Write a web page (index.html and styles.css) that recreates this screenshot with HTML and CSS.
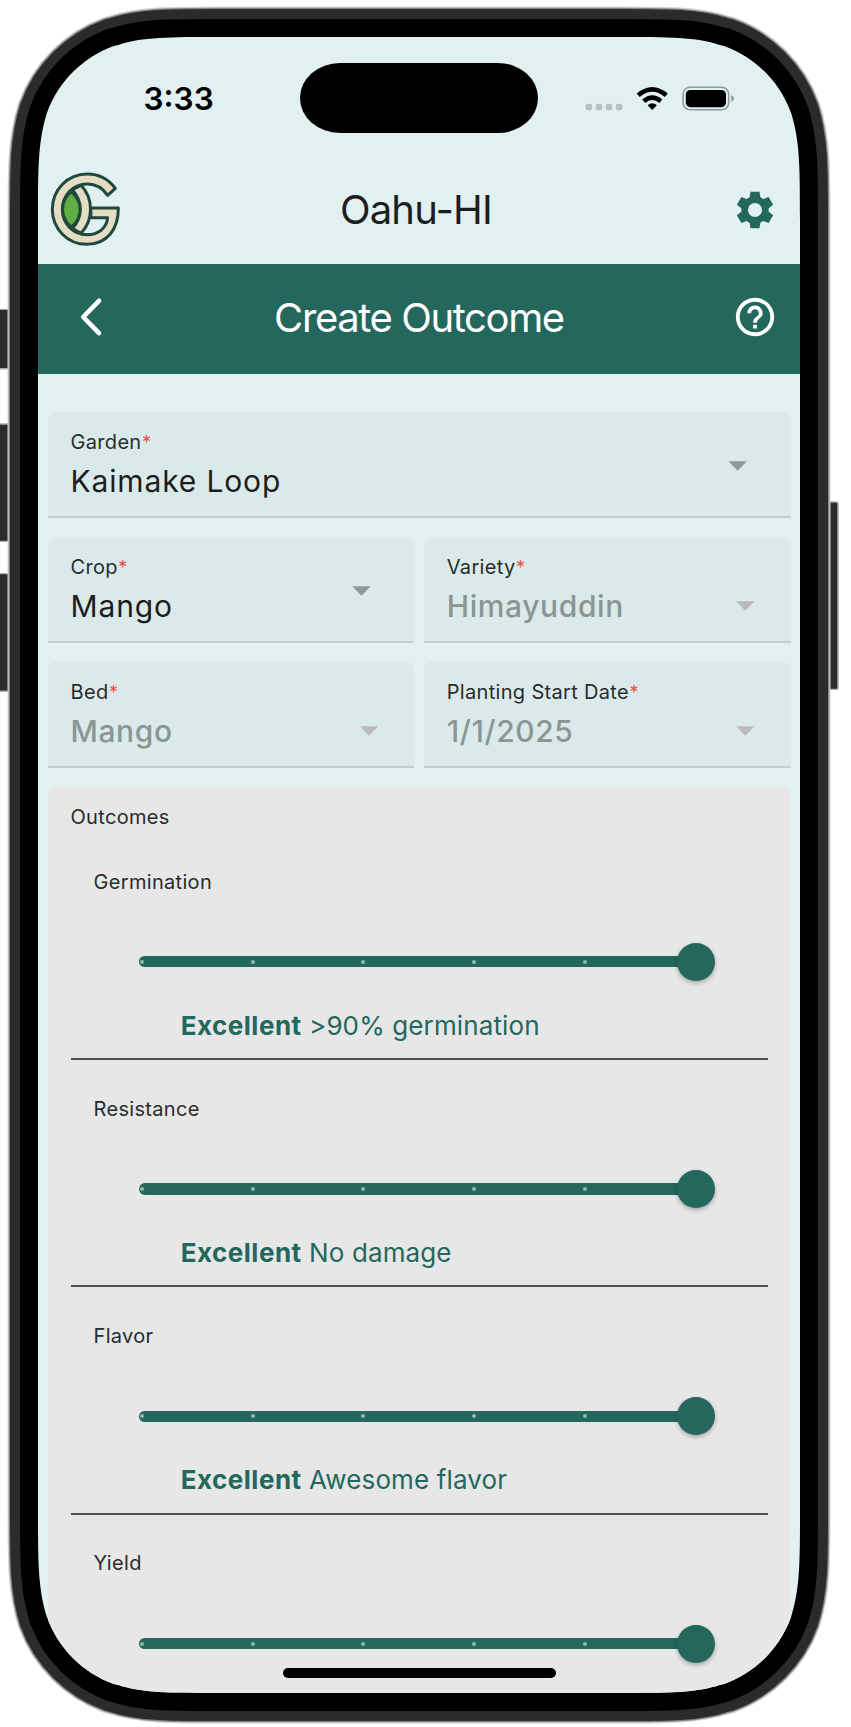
FILE: index.html
```html
<!DOCTYPE html>
<html lang="en">
<head>
<meta charset="utf-8">
<title>Create Outcome</title>
<link rel="stylesheet" href="styles.css">
</head>
<body>
<div class="phone">
  <svg class="bezel" width="851" height="1727" viewBox="0 0 851 1727" aria-hidden="true">
    <defs>
      <path id="outline" d="M183.4,0 H578.6 C631.4,0 657.8,0 681.6,7.9 L686.2,9 C717.3,20.3 741.7,44.7 753,75.8 C762,104.2 762,130.6 762,183.4 V1472.6 C762,1525.4 762,1551.8 753,1580.2 C741.7,1611.3 717.3,1635.7 686.2,1647 L681.6,1648.1 C657.8,1656 631.4,1656 578.6,1656 H183.4 C130.6,1656 104.2,1656 80.4,1648.1 L75.8,1647 C44.7,1635.7 20.3,1611.3 9,1580.2 C0,1551.8 0,1525.4 0,1472.6 V183.4 C0,130.6 0,104.2 9,75.8 C20.3,44.7 44.7,20.3 75.8,9 L80.4,7.9 C104.2,0 130.6,0 183.4,0 Z"/>
    </defs>
    <g fill="#2b2b2b" stroke="#aaa" stroke-width="1.4">
      <rect x="-6" y="309.4" width="20" height="59.4" rx="2"/>
      <rect x="-6" y="424" width="20" height="117.4" rx="2"/>
      <rect x="-6" y="573.6" width="20" height="117.6" rx="2"/>
      <rect x="822" y="502" width="16" height="187.4" rx="2"/>
    </g>
    <g transform="translate(38 37)" fill="#000">
      <use href="#outline" stroke="#d2d2d2" stroke-width="61"/>
      <use href="#outline" stroke="#848484" stroke-width="58.6"/>
      <use href="#outline" stroke="#2b2b2b" stroke-width="56"/>
      <use href="#outline" stroke="#000" stroke-width="36"/>
    </g>
  </svg>

  <main class="screen">
    <div class="status">
      <span class="time">3:33</span>
      <span class="island"></span>
      <svg class="indicators" width="152" height="28" viewBox="582 84 152 28" aria-hidden="true">
        <g fill="#b4c1c0">
          <rect x="584.5" y="103.8" width="6.6" height="6.4" rx="2.2"/>
          <rect x="594.6" y="103.8" width="6.6" height="6.4" rx="2.2"/>
          <rect x="604.7" y="103.8" width="6.6" height="6.4" rx="2.2"/>
          <rect x="614.8" y="103.8" width="6.6" height="6.4" rx="2.2"/>
        </g>
        <g fill="none" stroke="#000" stroke-width="4.6">
          <path d="M637.2 95.2 Q651.2 83.4 665.3 95.2"/>
          <path d="M642.7 101.2 Q651.2 94 659.8 101.2"/>
        </g>
        <path d="M651.2 110 L646.6 105.2 Q651.2 101.4 655.9 105.2 Z" fill="#000"/>
        <rect x="682.1" y="87.2" width="45.6" height="22.6" rx="7" fill="none" stroke="#8f9999" stroke-width="1.6"/>
        <rect x="684.8" y="90" width="40.2" height="17.2" rx="4.6" fill="#000"/>
        <path d="M730.3 95 Q733 96.3 733 98.5 Q733 100.7 730.3 102 Z" fill="#8f9999"/>
      </svg>
    </div>

    <header class="brand">
      <svg class="logo" width="72" height="76" viewBox="150 516 216 228" aria-label="logo">
        <g fill="#e4dcc3" stroke="#21483c" stroke-width="9" stroke-linejoin="round">
          <path d="M217 569 L243 556 C281 596 281 660 243 700 L217 685 C249 652 249 604 217 569 Z"/>
          <path d="M346 565 C325 537 296 522 262 522 C203 522 157 569 157 628 C157 687 203 733 260 733 C320 733 356 688 355 624 L272 624 L273 653 L323 653 C320 684 295 704 262 704 C219 704 187 671 187 628 C187 585 220 552 262 552 C287 552 309 565 323 586 Z"/>
        </g>
        <path d="M213 575 C249 604 249 653 213 681 C180 650 180 606 213 575 Z" fill="#60ae45" stroke="#21483c" stroke-width="8"/>
      </svg>
      <h1 class="title region">Oahu-HI</h1>
      <svg class="gear" width="38" height="38" viewBox="-57 -57 114 114" fill="#24675c" aria-label="settings">
        <defs><path id="tooth" d="M-13.5,-55 H13.5 L17.5,-30 H-17.5 Z"/></defs>
        <circle r="31" fill="none" stroke="#24675c" stroke-width="20"/>
        <use href="#tooth"/>
        <use href="#tooth" transform="rotate(60)"/>
        <use href="#tooth" transform="rotate(120)"/>
        <use href="#tooth" transform="rotate(180)"/>
        <use href="#tooth" transform="rotate(240)"/>
        <use href="#tooth" transform="rotate(300)"/>
      </svg>
    </header>

    <nav class="bar">
      <svg class="back" width="24" height="40" viewBox="0 0 24 40" aria-label="back"><path d="M20 3.8 L4.2 20 L20 36.2" fill="none" stroke="#fff" stroke-width="4.6" stroke-linecap="round" stroke-linejoin="round"/></svg>
      <h2 class="title page">Create Outcome</h2>
      <svg class="help" width="46" height="46" viewBox="0 0 24 24" fill="#fff" aria-label="help"><path d="M11 18h2v-2h-2v2zm1-16C6.48 2 2 6.48 2 12s4.48 10 10 10 10-4.48 10-10S17.52 2 12 2zm0 18c-4.41 0-8-3.59-8-8s3.59-8 8-8 8 3.59 8 8-3.59 8-8 8zm0-14c-2.21 0-4 1.79-4 4h2c0-1.1.9-2 2-2s2 .9 2 2c0 2-3 1.75-3 5h2c0-2.25 3-2.5 3-5 0-2.21-1.79-4-4-4z"/></svg>
    </nav>

    <form class="form">
      <div class="field wide">
        <div class="label">Garden<span class="req">*</span></div>
        <div class="value">Kaimake Loop</div>
        <i class="arrow"></i>
      </div>
      <div class="field">
        <div class="label">Crop<span class="req">*</span></div>
        <div class="value">Mango</div>
        <i class="arrow"></i>
      </div>
      <div class="field off">
        <div class="label">Variety<span class="req">*</span></div>
        <div class="value">Himayuddin</div>
        <i class="arrow"></i>
      </div>
      <div class="field off">
        <div class="label">Bed<span class="req">*</span></div>
        <div class="value">Mango</div>
        <i class="arrow"></i>
      </div>
      <div class="field off">
        <div class="label">Planting Start Date<span class="req">*</span></div>
        <div class="value">1/1/2025</div>
        <i class="arrow"></i>
      </div>

      <section class="outcomes">
        <div class="label">Outcomes</div>
        <div class="outcome">
          <div class="label">Germination</div>
          <div class="slider"><div class="track"><i></i><i></i><i></i><i></i><i></i></div><b class="thumb"></b></div>
          <p class="rating"><strong>Excellent</strong> &gt;90% germination</p>
        </div>
        <div class="outcome">
          <div class="label">Resistance</div>
          <div class="slider"><div class="track"><i></i><i></i><i></i><i></i><i></i></div><b class="thumb"></b></div>
          <p class="rating"><strong>Excellent</strong> No damage</p>
        </div>
        <div class="outcome">
          <div class="label">Flavor</div>
          <div class="slider"><div class="track"><i></i><i></i><i></i><i></i><i></i></div><b class="thumb"></b></div>
          <p class="rating"><strong>Excellent</strong> Awesome flavor</p>
        </div>
        <div class="outcome">
          <div class="label">Yield</div>
          <div class="slider"><div class="track"><i></i><i></i><i></i><i></i><i></i></div><b class="thumb"></b></div>
        </div>
      </section>
    </form>
    <span class="home"></span>
  </main>
</div>
</body>
</html>
```
FILE: styles.css
```css
* { box-sizing: border-box; }
body {
  margin: 0;
  background: #fff;
  color: #1d1d1d;
  font-family: Inter, "Liberation Sans", sans-serif;
  overflow: hidden;
}
.phone {
  position: relative;
  width: 851px;
  height: 1727px;
  padding: 37px 51px 34px 38px;
  overflow: hidden;
}
.bezel { position: absolute; inset: 0; }
.screen {
  position: relative;
  width: 762px;
  height: 1656px;
  overflow: hidden;
  background: #e1f1f1;
  clip-path: path("M183.4,0 H578.6 C631.4,0 657.8,0 681.6,7.9 L686.2,9 C717.3,20.3 741.7,44.7 753,75.8 C762,104.2 762,130.6 762,183.4 V1472.6 C762,1525.4 762,1551.8 753,1580.2 C741.7,1611.3 717.3,1635.7 686.2,1647 L681.6,1648.1 C657.8,1656 631.4,1656 578.6,1656 H183.4 C130.6,1656 104.2,1656 80.4,1648.1 L75.8,1647 C44.7,1635.7 20.3,1611.3 9,1580.2 C0,1551.8 0,1525.4 0,1472.6 V183.4 C0,130.6 0,104.2 9,75.8 C20.3,44.7 44.7,20.3 75.8,9 L80.4,7.9 C104.2,0 130.6,0 183.4,0 Z");
}

/* Status bar */
.status {
  display: flex;
  align-items: center;
  height: 122px;
  padding: 0 65.5px 0 105.5px;
}
.time {
  width: 156.5px;
  padding-top: 2px;
  color: #000;
  font-size: 31.5px;
  font-weight: 600;
  line-height: 38px;
}
.island {
  width: 238px;
  height: 70px;
  border-radius: 40px / 35px;
  background: #000;
}
.indicators { margin-left: auto; }

/* Headers */
.brand, .bar {
  display: grid;
  align-items: center;
}
.brand {
  height: 105px;
  grid-template-columns: 72px 1fr 38px;
  padding: 0 26.2px 4px 12px;
}
.bar {
  height: 110px;
  grid-template-columns: 24px 1fr 46px;
  padding: 0 22.2px 4px 41px;
  background: #24675c;
  color: #fff;
}
.title {
  margin: 0;
  font-size: 40px;
  font-weight: 380;
  line-height: 48px;
  text-align: center;
  white-space: nowrap;
}
.region { letter-spacing: -0.8px; padding-right: 26px; }
.page { letter-spacing: -1.4px; padding: 1px 0 0 3px; }

/* Fields */
.form {
  display: grid;
  grid-template-columns: 1fr 1fr;
  gap: 19px 9.5px;
  padding: 38px 9.5px 0;
}
.field {
  position: relative;
  height: 106px;
  padding: 17.7px 23px 0;
  border-bottom: 2px solid #c2cfcf;
  border-radius: 8px 8px 0 0;
  background: #daeaea;
}
.wide, .outcomes { grid-column: 1 / -1; }
.label {
  font-size: 20px;
  line-height: 24px;
  letter-spacing: 0.32px;
  color: #292c2c;
  white-space: nowrap;
}
.req {
  margin-left: 0.5px;
  color: #ea4f3f;
  font-size: 18px;
  line-height: 20px;
}
.value {
  margin-top: 8.9px;
  font-size: 30px;
  line-height: 36px;
  letter-spacing: 0.85px;
}
.off .value { color: #8b9593; font-weight: 500; letter-spacing: 0.6px; }
.arrow {
  position: absolute;
  top: 49.2px;
  right: 43.6px;
  width: 18.4px;
  height: 9.6px;
  background: #8e9997;
  clip-path: polygon(0 0, 100% 0, 50% 100%);
}
.off .arrow { top: 64.2px; right: 36px; background: #b9b9b9; }

/* Outcomes */
.outcomes {
  height: 960px;
  padding: 17.9px 23px 0;
  border-radius: 8px 8px 0 0;
  background: #e7e7e7;
}
.outcomes > .label { margin-bottom: 4px; }
.outcome {
  height: 227.3px;
  padding: 36.7px 0 0 23px;
  border-bottom: 2px solid #4f4f50;
}
.outcome:last-child { border-bottom: 0; }
.slider {
  display: flex;
  align-items: center;
  height: 38px;
  margin: 49.1px 52.8px 29px 45px;
}
.track {
  display: flex;
  flex: 1;
  align-items: center;
  gap: 106.7px;
  height: 11.4px;
  padding-left: 1.5px;
  border-radius: 6px;
  background: #24675c;
}
.track i {
  width: 4px;
  height: 4px;
  flex: none;
  border-radius: 50%;
  background: #90b7b1;
}
.thumb {
  width: 38px;
  height: 38px;
  margin-left: -19px;
  border-radius: 50%;
  background: #24675c;
  box-shadow: 0 2px 4px rgba(0, 0, 0, 0.3);
}
.rating {
  margin: 0 0 0 87.2px;
  color: #24675c;
  font-size: 26px;
  line-height: 32px;
  letter-spacing: 0.12px;
  white-space: nowrap;
}
.rating strong { letter-spacing: 0.5px; }
.home {
  position: absolute;
  left: 244.5px;
  bottom: 15px;
  width: 273px;
  height: 10px;
  border-radius: 5px;
  background: #000;
}
```
